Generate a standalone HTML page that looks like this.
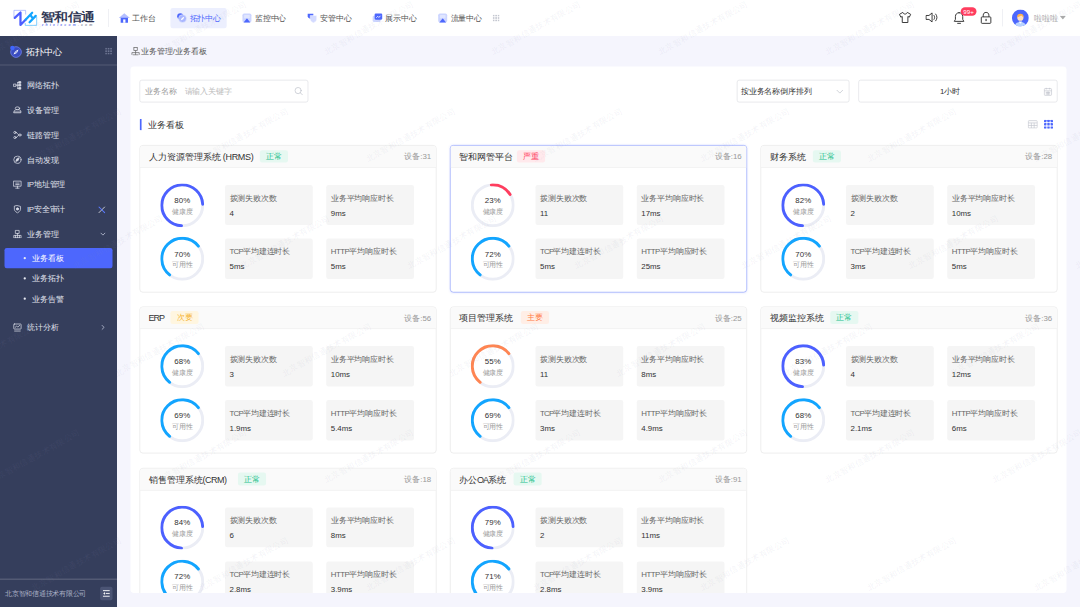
<!DOCTYPE html>
<html lang="zh"><head><meta charset="utf-8"><title>业务看板</title>
<style>
*{box-sizing:border-box;margin:0;padding:0}
html,body{width:1080px;height:607px;overflow:hidden;background:#f5f5fd}
body{font-family:"Liberation Sans",sans-serif;color:#333}
#root{position:absolute;left:0;top:0;width:1920px;height:1080px;transform:scale(0.5625);transform-origin:0 0;background:#f5f5fd;overflow:hidden;font-size:14px}
.hd{position:absolute;left:0;top:0;width:1920px;height:64px;background:#fff}
.logo{position:absolute;left:25px;top:13px}
.hdiv{position:absolute;left:192px;top:16px;width:1px;height:32px;background:#e3e5ec}
.nav{position:absolute;left:201px;top:14px;display:flex}
.ni{height:36px;padding:0 10px;margin-right:16px;display:flex;align-items:center;border-radius:4px;color:#555;font-size:14px;white-space:nowrap}
.ni svg{margin-right:4px;flex:none}
.ni span{position:relative;top:1.800px}
.ni.act{background:#eceffe;color:#4d67fd}
.hr{position:absolute;right:0;top:0;height:64px}
.side{position:absolute;left:0;top:64px;width:208px;height:1016px;background:#353e5c;color:#e4e7f2}
.sh{height:52px;border-bottom:1px solid rgba(255,255,255,.3);position:relative}
.sh .t{position:absolute;left:47px;top:16px;font-size:16px;color:#fff;line-height:24px}
.mi{height:44px;position:relative;padding-left:48px;line-height:44px;font-size:14px;color:#e1e4ee;white-space:nowrap}
.mi>svg:first-child{position:absolute;left:23px;top:14px}
.mi .arr{position:absolute;right:19px;top:16px}
.menu{padding-top:14px}
.sub{height:36px;line-height:36px;margin:0 8px;padding-left:49px;position:relative;border-radius:4px;font-size:14px;color:#e1e4ee}
.sub i{position:absolute;left:34px;top:16px;width:4px;height:4px;border-radius:50%;background:#e9ebf3}
.sub.act{background:#4d67fd;color:#fff;margin-top:3px}
.sf{position:absolute;left:0;bottom:0;width:208px;height:51px;border-top:1px solid rgba(255,255,255,.3)}
.sf span{position:absolute;left:9px;top:18px;font-size:12px;color:#aab0c6;line-height:16px;white-space:nowrap}
.sf b{position:absolute;left:178px;top:13px;width:22px;height:24px;border-radius:3px;background:#4b5474}
.bc{position:absolute;left:232px;top:64px;height:54px;line-height:54px;font-size:14px;color:#555;padding-left:19px}
.bc svg{position:absolute;left:1px;top:19px}
.panel{position:absolute;left:232px;top:118px;width:1664px;height:936px;background:#fff;border-radius:6px;overflow:hidden}
.inp{position:absolute;top:24px;height:40px;border:1px solid #d8dadf;border-radius:4px;background:#fff;font-size:14px;line-height:38px;white-space:nowrap}
.st{position:absolute;left:16px;top:93px;height:21px;border-left:4px solid #4d67fd;border-radius:2px;padding-left:11px;font-size:16px;line-height:21px;color:#333}
.card{position:absolute;width:528px;height:261.4px;border:1px solid #e0e0e0;border-radius:6px;background:#fff;overflow:hidden}
.card.sel{border-color:#7f92fb;box-shadow:0 0 4px rgba(77,103,253,.18)}
.ch{height:39px;background:#fafafa;border-bottom:1px solid #ebebeb;position:relative;line-height:39px;padding-left:15px;white-space:nowrap}
.ct{font-size:16px;color:#333}
.tag{position:absolute;top:7.500px;height:22.500px;line-height:23.500px;width:50px;text-align:center;border-radius:4px;font-size:13.500px}
.dev{position:absolute;right:8.500px;top:0;font-size:14px;color:#999}
.cb{position:relative}
.ring{position:relative;width:78px;height:78px}
.ring svg{display:block}
.rt{position:absolute;left:0;top:0;width:100%;text-align:center}
.rp{margin-top:22px;font-size:14px;line-height:16px;color:#333}
.rl{font-size:12px;line-height:16px;color:#999;margin-top:4px}
.sb{position:absolute;width:156px;height:71.5px;background:#f5f5f5;border-radius:4px;padding:12px 8px 0 8px;white-space:nowrap}
.sl{font-size:14px;line-height:22px;color:#666}
.sv{font-size:14px;line-height:22px;color:#333;margin-top:5px}
.wm{position:absolute;left:0;top:0;width:1920px;height:1080px;overflow:hidden;pointer-events:none}
.wm span{position:absolute;font-size:14.500px;line-height:16px;color:rgba(140,140,175,.11);white-space:nowrap;transform-origin:0 100%;transform:rotate(-29deg)}
</style></head><body><div id="root">
<div class="hd">
<div class="logo"><svg width="80" height="64" viewBox="0 0 80 64" style="position:absolute;left:-25px;top:-13px"><path d="M24.800 30.400V18.400H45.600V25.800" fill="none" stroke="#8f9fff" stroke-width="1.100"/><path d="M44.850 40.900V45.100H65.200V29.700" fill="none" stroke="#35b3ff" stroke-width="1.100"/><path d="M26.200 31.760L36.400 22.270V44.400L45.900 34.600" fill="none" stroke="#4d5eff" stroke-width="4" stroke-linecap="round" stroke-linejoin="round"/><path d="M45.900 34.600L57.200 22.600M52.600 39.500L63.500 28.200M54.300 26.800L58.200 32.500" fill="none" stroke="#12a5ff" stroke-width="4" stroke-linecap="round"/></svg><div style="position:absolute;left:47px;top:3.500px;font-size:23.300px;line-height:26px;font-weight:900;color:#2e3553;white-space:nowrap;transform:scale(1.045,.9);transform-origin:0 50%">智和信通</div><div style="position:absolute;left:49px;top:28.500px;font-size:6px;line-height:6px;font-weight:bold;font-style:italic;color:#6b7af0;white-space:nowrap;letter-spacing:3.900px">zhtelecom<span style="color:#8a8fa3">.com</span></div></div>
<div class="hdiv"></div>
<div class="nav"><div class="ni"><svg width="20" height="20" viewBox="0 0 20 20"><path d="M0 10L10 1.500 20 10z" fill="#b4bfff"/><path d="M3.500 9.500h13v9h-13z" fill="#4d67fd"/><rect x="8" y="12.500" width="4" height="6" fill="#fff"/></svg><span>工作台</span></div><div class="ni act"><svg width="20" height="20" viewBox="0 0 20 20"><circle cx="7.500" cy="7" r="5.500" fill="#4d67fd"/><circle cx="11.500" cy="11" r="7" fill="#a9b6ff" stroke="#eceffe" stroke-width="1"/><path d="M15 7.500l-2.300 4.700L8 14.500l2.300-4.700z" fill="#fff"/></svg><span>拓扑中心</span></div><div class="ni"><svg width="20" height="20" viewBox="0 0 20 20"><rect x="2" y="2" width="16" height="16" rx="3" fill="#ccd5ff"/><path d="M4 18l6-7.500 6 7.500z" fill="#4d67fd"/><path d="M7.500 13.500L10 10.500l2.500 3z" fill="#fff" opacity=".0"/><rect x="5" y="4.500" width="10" height="6" rx="1" fill="#e8ecff" opacity=".7"/></svg><span>监控中心</span></div><div class="ni"><svg width="20" height="20" viewBox="0 0 20 20"><path d="M2 2.500h10v4.500c0 3-5 5-5 5S2 10 2 7z" fill="#4d67fd"/><path d="M6.500 5.500h11.500v6.500c0 4-5.750 6.500-5.750 6.500S6.500 16 6.500 12z" fill="#d3daff" stroke="#fff" stroke-width=".8"/></svg><span>安管中心</span></div><div class="ni"><svg width="20" height="20" viewBox="0 0 20 20"><rect x="1.500" y="6" width="14" height="11" rx="2" fill="#ccd5ff"/><rect x="5" y="2" width="13.500" height="11" rx="2" fill="#4d67fd"/><path d="M8 9.500l2.500-2.500 2 2 3-3" stroke="#fff" stroke-width="1.500" fill="none"/></svg><span>展示中心</span></div><div class="ni"><svg width="20" height="20" viewBox="0 0 20 20"><rect x="2" y="2" width="16" height="16" rx="3" fill="#ccd5ff"/><path d="M4 18l6-7.500 6 7.500z" fill="#4d67fd"/><path d="M7.500 13.500L10 10.500l2.500 3z" fill="#fff" opacity=".0"/><rect x="5" y="4.500" width="10" height="6" rx="1" fill="#e8ecff" opacity=".7"/></svg><span>流量中心</span></div><svg style="margin:12px 0 0 -7px" width="12" height="12" viewBox="0 0 12 12" fill="#c4c7d0"><rect x="0" y="0" width="3" height="3"/><rect x="4.500" y="0" width="3" height="3"/><rect x="9" y="0" width="3" height="3"/><rect x="0" y="4.500" width="3" height="3"/><rect x="4.500" y="4.500" width="3" height="3"/><rect x="9" y="4.500" width="3" height="3"/><rect x="0" y="9" width="3" height="3"/><rect x="4.500" y="9" width="3" height="3"/><rect x="9" y="9" width="3" height="3"/></svg></div>
<svg style="position:absolute;left:1597px;top:20px" width="24" height="22" viewBox="0 0 24 22" fill="none" stroke="#333" stroke-width="1.700" stroke-linejoin="round"><path d="M8 2L2 5.500l2.500 5 2.500-1.200V20h10V9.300l2.500 1.200 2.500-5L16 2c-.5 1.800-2 3-4 3S8.500 3.800 8 2z"/></svg>
<svg style="position:absolute;left:1645px;top:20px" width="24" height="22" viewBox="0 0 24 22" fill="none" stroke="#333" stroke-width="1.700" stroke-linejoin="round" stroke-linecap="round"><path d="M2 7.500h4.500L12 3v16l-5.500-4.500H2z"/><path d="M15.500 7.500c1.500 2 1.500 5 0 7M18.500 5c3 3.500 3 8.500 0 12"/></svg>
<svg style="position:absolute;left:1694px;top:20px" width="22" height="24" viewBox="0 0 22 24" fill="none" stroke="#333" stroke-width="1.700" stroke-linejoin="round" stroke-linecap="round"><path d="M11 2.500c-4 0-6.500 3-6.500 7v5L2.500 18h17l-2-3.500v-5c0-4-2.500-7-6.500-7z"/><path d="M8.500 21.500h5"/></svg>
<div style="position:absolute;left:1708px;top:13px;width:28px;height:15px;border-radius:8px;background:#ff3d5e;color:#fff;font-size:11px;line-height:15px;text-align:center">99+</div>
<svg style="position:absolute;left:1742px;top:20px" width="22" height="24" viewBox="0 0 22 24" fill="none" stroke="#333" stroke-width="1.700" stroke-linejoin="round"><rect x="2.500" y="10" width="17" height="11.500" rx="1.500"/><path d="M6 10V7c0-3 2-5 5-5s5 2 5 5v3"/><rect x="10" y="13.500" width="2" height="4" fill="#333" stroke="none"/></svg>
<div style="position:absolute;left:1782px;top:16px;width:1px;height:31px;background:#e3e5ec"></div>
<svg style="position:absolute;left:1799px;top:17px" width="30" height="30" viewBox="0 0 30 30"><defs><clipPath id="av"><circle cx="15" cy="15" r="15"/></clipPath></defs><circle cx="15" cy="15" r="15" fill="#4d67fd"/><g clip-path="url(#av)"><path d="M5 31c0-6 4-9 10-9s10 3 10 9z" fill="#b9d4ff"/><path d="M12 21h6l-3 4z" fill="#fff"/><circle cx="15" cy="14.500" r="5.500" fill="#ffe0c2"/><path d="M9 13.500c0-4 2.500-6 6-6s6 2 6 6c-2-.5-3.500-1.500-4.500-3-1.500 1.500-4.500 2.500-7.500 3z" fill="#ffb04d"/></g></svg>
<div style="position:absolute;left:1839px;top:21px;font-size:14px;line-height:22px;color:#aaa;white-space:nowrap">啦啦啦</div>
<svg style="position:absolute;left:1884px;top:28px" width="11" height="7" viewBox="0 0 11 7"><path d="M0 0h11L5.500 6.500z" fill="#aaa"/></svg>
</div>
<div class="side">
<div class="sh"><svg style="position:absolute;left:16px;top:16px" width="24" height="24" viewBox="0 0 24 24"><circle cx="12.500" cy="12.500" r="9.500" fill="#3a4cc0" stroke="#6f80ea" stroke-width="1.500"/><circle cx="6" cy="5.500" r="4" fill="#3f66ff"/><path d="M17 8l-3 6-6 3 3-6z" fill="#fff"/><circle cx="12.500" cy="12.500" r="1.200" fill="#3a4cc0"/></svg><svg style="position:absolute;left:187px;top:21px" width="12" height="12" viewBox="0 0 12 12" fill="#6d7592"><rect x="0" y="0" width="3" height="3"/><rect x="4.500" y="0" width="3" height="3"/><rect x="9" y="0" width="3" height="3"/><rect x="0" y="4.500" width="3" height="3"/><rect x="4.500" y="4.500" width="3" height="3"/><rect x="9" y="4.500" width="3" height="3"/><rect x="0" y="9" width="3" height="3"/><rect x="4.500" y="9" width="3" height="3"/><rect x="9" y="9" width="3" height="3"/></svg><div class="t">拓扑中心</div></div>
<div class="menu"><div class="mi"><svg width="16" height="16" viewBox="0 0 16 16" fill="none" stroke="#dde0ea" stroke-width="1.3" stroke-linecap="round" stroke-linejoin="round"><rect x="1.5" y="5.5" width="4" height="4"/><path d="M5.5 7.5h3M8.5 2.5v11M8.5 2.5h3M8.5 7.5h3M8.5 13.5h3"/><rect x="11" y="1" width="3" height="3" fill="#dde0ea"/><rect x="11" y="6" width="3" height="3" fill="#dde0ea"/><rect x="11" y="11.5" width="3" height="3" fill="#dde0ea"/></svg><span>网络拓扑</span></div><div class="mi"><svg width="16" height="16" viewBox="0 0 16 16" fill="none" stroke="#dde0ea" stroke-width="1.3" stroke-linecap="round" stroke-linejoin="round"><ellipse cx="8" cy="4.5" rx="4" ry="2.5"/><path d="M2 9.5c0-1.5 2-2.5 6-2.5s6 1 6 2.5v3H2z"/><path d="M2 11h12"/></svg><span>设备管理</span></div><div class="mi"><svg width="16" height="16" viewBox="0 0 16 16" fill="none" stroke="#dde0ea" stroke-width="1.3" stroke-linecap="round" stroke-linejoin="round"><circle cx="3.5" cy="3.5" r="2"/><circle cx="3.5" cy="12.5" r="2"/><circle cx="12.5" cy="8" r="2"/><path d="M5.5 3.5c3 0 3 4.5 5 4.5M5.5 12.5c3 0 3-4.5 5-4.5"/></svg><span>链路管理</span></div><div class="mi"><svg width="16" height="16" viewBox="0 0 16 16" fill="none" stroke="#dde0ea" stroke-width="1.3" stroke-linecap="round" stroke-linejoin="round"><circle cx="8" cy="8" r="6.5"/><path d="M11 5L9.3 9.3 5 11l1.7-4.3z" fill="#dde0ea"/></svg><span>自动发现</span></div><div class="mi"><svg width="16" height="16" viewBox="0 0 16 16" fill="none" stroke="#dde0ea" stroke-width="1.3" stroke-linecap="round" stroke-linejoin="round"><rect x="1.5" y="2" width="13" height="9"/><path d="M5 14.5h6M8 11v3.5M5 5.5h6M5 8h6"/></svg><span><span style="letter-spacing:-.6px">IP</span>地址管理</span></div><div class="mi"><svg width="16" height="16" viewBox="0 0 16 16" fill="none" stroke="#dde0ea" stroke-width="1.3" stroke-linecap="round" stroke-linejoin="round"><path d="M8 1.5l5.5 1.5v5c0 3.5-5.5 6.5-5.5 6.5S2.500 11.500 2.500 8V3z"/><circle cx="8" cy="7.500" r="2" fill="#dde0ea"/></svg><span><span style="letter-spacing:-.6px">IP</span>安全审计</span><svg class="arr" style="right:20px" width="14" height="14" viewBox="0 0 14 14" fill="none" stroke-linecap="round"><path d="M2 12L12 2" stroke="#fff" stroke-width="1.300"/><path d="M2 2l10 10" stroke="#5b7bff" stroke-width="1.800"/></svg></div><div class="mi"><svg width="16" height="16" viewBox="0 0 16 16" fill="none" stroke="#dde0ea" stroke-width="1.3" stroke-linecap="round" stroke-linejoin="round"><rect x="5" y="1.500" width="6" height="5.500"/><path d="M3 14.500h10M1.500 14.500v-4h13v4M8 7v7.500M4.500 10.500v4M11.500 10.500v4"/></svg><span>业务管理</span><svg class="arr" width="12" height="12" viewBox="0 0 12 12" fill="none" stroke="#b8bed2" stroke-width="1.5" stroke-linecap="round" stroke-linejoin="round"><path d="M2.500 4.500L6 8l3.500-3.500"/></svg></div><div class="sub act"><i></i>业务看板</div><div class="sub"><i></i>业务拓扑</div><div class="sub"><i></i>业务告警</div><div class="mi" style="margin-top:11px"><svg width="16" height="16" viewBox="0 0 16 16" fill="none" stroke="#dde0ea" stroke-width="1.3" stroke-linecap="round" stroke-linejoin="round"><rect x="1.500" y="2" width="13" height="9" rx="1"/><path d="M4 8l2.500-2.500L8.500 7.500 12 4.500M3 14.500h10"/></svg><span>统计分析</span><svg class="arr" width="12" height="12" viewBox="0 0 12 12" fill="none" stroke="#b8bed2" stroke-width="1.500" stroke-linecap="round" stroke-linejoin="round"><path d="M4.500 2.500L8 6 4.500 9.500"/></svg></div></div>
<div class="sf"><span>北京智和信通技术有限公司</span><b><svg style="position:absolute;left:4px;top:5px" width="14" height="14" viewBox="0 0 14 14" fill="none" stroke="#fff" stroke-width="1.600"><path d="M1 2h12M6 7h7M1 12h12"/><path d="M4.500 4.500L1.500 7l3 2.500z" fill="#fff" stroke="none"/></svg></b></div>
</div>
<div class="bc"><svg width="16" height="16" viewBox="0 0 16 16" fill="none" stroke="#666" stroke-width="1.300"><rect x="5" y="1.500" width="6" height="5.500"/><path d="M3 14.500h10M1.500 14.500v-4h13v4M8 7v7.500"/></svg>业务管理/业务看板</div>
<div class="panel">
<div class="inp" style="left:16px;width:300px;padding-left:9px;color:#999">业务名称<span style="color:#bbb;margin-left:14px">请输入关键字</span><svg style="position:absolute;right:8px;top:11px" width="16" height="16" viewBox="0 0 16 16" fill="none" stroke="#c0c4cc" stroke-width="1.300" stroke-linecap="round"><circle cx="7" cy="7" r="5.500"/><path d="M11 11l3.500 3.500"/></svg></div>
<div class="inp" style="left:1078px;width:200px;padding-left:6px;color:#333">按业务名称倒序排列<svg style="position:absolute;right:9px;top:13px" width="14" height="14" viewBox="0 0 14 14" fill="none" stroke="#c0c4cc" stroke-width="1.300" stroke-linecap="round" stroke-linejoin="round"><path d="M2 4.500l5 5 5-5"/></svg></div>
<div class="inp" style="left:1294px;width:354px;text-align:center;color:#333;padding-right:28px">1小时<svg style="position:absolute;right:8px;top:12px" width="16" height="16" viewBox="0 0 16 16" fill="none" stroke="#c0c4cc" stroke-width="1.200"><rect x="1.500" y="2.500" width="13" height="12" rx="1.500"/><path d="M1.500 6.500h13M5 1v3M11 1v3M4 9.500h8M4 12h8M6.700 7.500v6M9.300 7.500v6"/></svg></div>
<div class="st">业务看板</div>
<svg style="position:absolute;left:1595px;top:95px" width="18" height="16" viewBox="0 0 18 16" fill="none" stroke="#c0c4cc" stroke-width="1.200"><rect x="1" y="1.500" width="16" height="13" rx="1.500"/><path d="M1 5.500h16M1 10h16M6.500 5.500v9M11.500 5.500v9"/></svg>
<svg style="position:absolute;left:1624px;top:95px" width="16" height="16" viewBox="0 0 16 16" fill="#4d67fd"><rect x="0" y="0" width="4.300" height="4.300" rx=".8"/><rect x="5.850" y="0" width="4.300" height="4.300" rx=".8"/><rect x="11.700" y="0" width="4.300" height="4.300" rx=".8"/><rect x="0" y="5.850" width="4.300" height="4.300" rx=".8"/><rect x="5.850" y="5.850" width="4.300" height="4.300" rx=".8"/><rect x="11.700" y="5.850" width="4.300" height="4.300" rx=".8"/><rect x="0" y="11.700" width="4.300" height="4.300" rx=".8"/><rect x="5.850" y="11.700" width="4.300" height="4.300" rx=".8"/><rect x="11.700" y="11.700" width="4.300" height="4.300" rx=".8"/></svg>
<div class="card" style="left:16px;top:140.3px">
<div class="ch"><span class="ct">人力资源管理系统<span style="letter-spacing:-.5px"> (HRMS)</span></span><span class="tag" style="left:212.5px;background:#e6f8f1;color:#1abf8c">正常</span><span class="dev">设备:31</span></div>
<div class="cb">
<div style="position:absolute;left:36px;top:27.4px"><div class="ring"><svg width="78" height="78" viewBox="0 0 78 78"><circle cx="39.0" cy="39.0" r="36.4" fill="none" stroke="#ebedf5" stroke-width="5.2"/><path d="M37.73 75.38A36.4 36.4 0 1 1 75.35 37.09" fill="none" stroke="#4c60ff" stroke-width="5.2" stroke-linecap="round"/></svg><div class="rt"><div class="rp">80%</div><div class="rl">健康度</div></div></div></div>
<div style="position:absolute;left:36px;top:123.1px"><div class="ring"><svg width="78" height="78" viewBox="0 0 78 78"><circle cx="39.0" cy="39.0" r="36.4" fill="none" stroke="#ebedf5" stroke-width="5.2"/><path d="M16.59 67.68A36.4 36.4 0 1 1 67.68 16.59" fill="none" stroke="#12a5ff" stroke-width="5.2" stroke-linecap="round"/></svg><div class="rt"><div class="rp">70%</div><div class="rl">可用性</div></div></div></div>
<div class="sb" style="left:151px;top:30.4px"><div class="sl">拨测失败次数</div><div class="sv">4</div></div>
<div class="sb" style="left:331px;top:30.4px"><div class="sl">业务平均响应时长</div><div class="sv">9ms</div></div>
<div class="sb" style="left:151px;top:126.2px"><div class="sl"><span style="letter-spacing:-1.400px">TCP</span>平均建连时长</div><div class="sv">5ms</div></div>
<div class="sb" style="left:331px;top:126.2px"><div class="sl"><span style="letter-spacing:-.85px">HTTP</span>平均响应时长</div><div class="sv">5ms</div></div>
</div></div>
<div class="card sel" style="left:568px;top:140.3px">
<div class="ch"><span class="ct">智和网管平台</span><span class="tag" style="left:117.9px;background:#ffe9ec;color:#ff3d5e">严重</span><span class="dev">设备:16</span></div>
<div class="cb">
<div style="position:absolute;left:36px;top:27.4px"><div class="ring"><svg width="78" height="78" viewBox="0 0 78 78"><circle cx="39.0" cy="39.0" r="36.4" fill="none" stroke="#ebedf5" stroke-width="5.2"/><path d="M36.46 2.69A36.4 36.4 0 0 1 69.87 19.71" fill="none" stroke="#ff3d5e" stroke-width="5.2" stroke-linecap="round"/></svg><div class="rt"><div class="rp">23%</div><div class="rl">健康度</div></div></div></div>
<div style="position:absolute;left:36px;top:123.1px"><div class="ring"><svg width="78" height="78" viewBox="0 0 78 78"><circle cx="39.0" cy="39.0" r="36.4" fill="none" stroke="#ebedf5" stroke-width="5.2"/><path d="M16.59 67.68A36.4 36.4 0 1 1 67.68 16.59" fill="none" stroke="#12a5ff" stroke-width="5.2" stroke-linecap="round"/></svg><div class="rt"><div class="rp">72%</div><div class="rl">可用性</div></div></div></div>
<div class="sb" style="left:151px;top:30.4px"><div class="sl">拨测失败次数</div><div class="sv">11</div></div>
<div class="sb" style="left:331px;top:30.4px"><div class="sl">业务平均响应时长</div><div class="sv">17ms</div></div>
<div class="sb" style="left:151px;top:126.2px"><div class="sl"><span style="letter-spacing:-1.400px">TCP</span>平均建连时长</div><div class="sv">5ms</div></div>
<div class="sb" style="left:331px;top:126.2px"><div class="sl"><span style="letter-spacing:-.85px">HTTP</span>平均响应时长</div><div class="sv">25ms</div></div>
</div></div>
<div class="card" style="left:1120px;top:140.3px">
<div class="ch"><span class="ct">财务系统</span><span class="tag" style="left:92.0px;background:#e6f8f1;color:#1abf8c">正常</span><span class="dev">设备:28</span></div>
<div class="cb">
<div style="position:absolute;left:36px;top:27.4px"><div class="ring"><svg width="78" height="78" viewBox="0 0 78 78"><circle cx="39.0" cy="39.0" r="36.4" fill="none" stroke="#ebedf5" stroke-width="5.2"/><path d="M37.73 75.38A36.4 36.4 0 1 1 75.35 37.09" fill="none" stroke="#4c60ff" stroke-width="5.2" stroke-linecap="round"/></svg><div class="rt"><div class="rp">82%</div><div class="rl">健康度</div></div></div></div>
<div style="position:absolute;left:36px;top:123.1px"><div class="ring"><svg width="78" height="78" viewBox="0 0 78 78"><circle cx="39.0" cy="39.0" r="36.4" fill="none" stroke="#ebedf5" stroke-width="5.2"/><path d="M16.59 67.68A36.4 36.4 0 1 1 67.68 16.59" fill="none" stroke="#12a5ff" stroke-width="5.2" stroke-linecap="round"/></svg><div class="rt"><div class="rp">70%</div><div class="rl">可用性</div></div></div></div>
<div class="sb" style="left:151px;top:30.4px"><div class="sl">拨测失败次数</div><div class="sv">2</div></div>
<div class="sb" style="left:331px;top:30.4px"><div class="sl">业务平均响应时长</div><div class="sv">10ms</div></div>
<div class="sb" style="left:151px;top:126.2px"><div class="sl"><span style="letter-spacing:-1.400px">TCP</span>平均建连时长</div><div class="sv">3ms</div></div>
<div class="sb" style="left:331px;top:126.2px"><div class="sl"><span style="letter-spacing:-.85px">HTTP</span>平均响应时长</div><div class="sv">5ms</div></div>
</div></div>
<div class="card" style="left:16px;top:426.90000000000003px">
<div class="ch"><span class="ct"><span style="letter-spacing:-1.75px">ERP</span></span><span class="tag" style="left:54.0px;background:#fff6e0;color:#f5b431">次要</span><span class="dev">设备:56</span></div>
<div class="cb">
<div style="position:absolute;left:36px;top:27.4px"><div class="ring"><svg width="78" height="78" viewBox="0 0 78 78"><circle cx="39.0" cy="39.0" r="36.4" fill="none" stroke="#ebedf5" stroke-width="5.2"/><path d="M16.59 67.68A36.4 36.4 0 1 1 67.68 16.59" fill="none" stroke="#12a5ff" stroke-width="5.2" stroke-linecap="round"/></svg><div class="rt"><div class="rp">68%</div><div class="rl">健康度</div></div></div></div>
<div style="position:absolute;left:36px;top:123.1px"><div class="ring"><svg width="78" height="78" viewBox="0 0 78 78"><circle cx="39.0" cy="39.0" r="36.4" fill="none" stroke="#ebedf5" stroke-width="5.2"/><path d="M16.59 67.68A36.4 36.4 0 1 1 67.68 16.59" fill="none" stroke="#12a5ff" stroke-width="5.2" stroke-linecap="round"/></svg><div class="rt"><div class="rp">69%</div><div class="rl">可用性</div></div></div></div>
<div class="sb" style="left:151px;top:30.4px"><div class="sl">拨测失败次数</div><div class="sv">3</div></div>
<div class="sb" style="left:331px;top:30.4px"><div class="sl">业务平均响应时长</div><div class="sv">10ms</div></div>
<div class="sb" style="left:151px;top:126.2px"><div class="sl"><span style="letter-spacing:-1.400px">TCP</span>平均建连时长</div><div class="sv">1.9ms</div></div>
<div class="sb" style="left:331px;top:126.2px"><div class="sl"><span style="letter-spacing:-.85px">HTTP</span>平均响应时长</div><div class="sv">5.4ms</div></div>
</div></div>
<div class="card" style="left:568px;top:426.90000000000003px">
<div class="ch"><span class="ct">项目管理系统</span><span class="tag" style="left:125.4px;background:#ffeee6;color:#ff7a45">主要</span><span class="dev">设备:25</span></div>
<div class="cb">
<div style="position:absolute;left:36px;top:27.4px"><div class="ring"><svg width="78" height="78" viewBox="0 0 78 78"><circle cx="39.0" cy="39.0" r="36.4" fill="none" stroke="#ebedf5" stroke-width="5.2"/><path d="M16.59 67.68A36.4 36.4 0 1 1 67.68 16.59" fill="none" stroke="#ff8552" stroke-width="5.2" stroke-linecap="round"/></svg><div class="rt"><div class="rp">55%</div><div class="rl">健康度</div></div></div></div>
<div style="position:absolute;left:36px;top:123.1px"><div class="ring"><svg width="78" height="78" viewBox="0 0 78 78"><circle cx="39.0" cy="39.0" r="36.4" fill="none" stroke="#ebedf5" stroke-width="5.2"/><path d="M16.59 67.68A36.4 36.4 0 1 1 67.68 16.59" fill="none" stroke="#12a5ff" stroke-width="5.2" stroke-linecap="round"/></svg><div class="rt"><div class="rp">69%</div><div class="rl">可用性</div></div></div></div>
<div class="sb" style="left:151px;top:30.4px"><div class="sl">拨测失败次数</div><div class="sv">11</div></div>
<div class="sb" style="left:331px;top:30.4px"><div class="sl">业务平均响应时长</div><div class="sv">8ms</div></div>
<div class="sb" style="left:151px;top:126.2px"><div class="sl"><span style="letter-spacing:-1.400px">TCP</span>平均建连时长</div><div class="sv">3ms</div></div>
<div class="sb" style="left:331px;top:126.2px"><div class="sl"><span style="letter-spacing:-.85px">HTTP</span>平均响应时长</div><div class="sv">4.9ms</div></div>
</div></div>
<div class="card" style="left:1120px;top:426.90000000000003px">
<div class="ch"><span class="ct">视频监控系统</span><span class="tag" style="left:122.9px;background:#e6f8f1;color:#1abf8c">正常</span><span class="dev">设备:36</span></div>
<div class="cb">
<div style="position:absolute;left:36px;top:27.4px"><div class="ring"><svg width="78" height="78" viewBox="0 0 78 78"><circle cx="39.0" cy="39.0" r="36.4" fill="none" stroke="#ebedf5" stroke-width="5.2"/><path d="M37.73 75.38A36.4 36.4 0 1 1 75.35 37.09" fill="none" stroke="#4c60ff" stroke-width="5.2" stroke-linecap="round"/></svg><div class="rt"><div class="rp">83%</div><div class="rl">健康度</div></div></div></div>
<div style="position:absolute;left:36px;top:123.1px"><div class="ring"><svg width="78" height="78" viewBox="0 0 78 78"><circle cx="39.0" cy="39.0" r="36.4" fill="none" stroke="#ebedf5" stroke-width="5.2"/><path d="M16.59 67.68A36.4 36.4 0 1 1 67.68 16.59" fill="none" stroke="#12a5ff" stroke-width="5.2" stroke-linecap="round"/></svg><div class="rt"><div class="rp">68%</div><div class="rl">可用性</div></div></div></div>
<div class="sb" style="left:151px;top:30.4px"><div class="sl">拨测失败次数</div><div class="sv">4</div></div>
<div class="sb" style="left:331px;top:30.4px"><div class="sl">业务平均响应时长</div><div class="sv">12ms</div></div>
<div class="sb" style="left:151px;top:126.2px"><div class="sl"><span style="letter-spacing:-1.400px">TCP</span>平均建连时长</div><div class="sv">2.1ms</div></div>
<div class="sb" style="left:331px;top:126.2px"><div class="sl"><span style="letter-spacing:-.85px">HTTP</span>平均响应时长</div><div class="sv">6ms</div></div>
</div></div>
<div class="card" style="left:16px;top:713.5px">
<div class="ch"><span class="ct">销售管理系统<span style="letter-spacing:-.9px">(CRM)</span></span><span class="tag" style="left:173.9px;background:#e6f8f1;color:#1abf8c">正常</span><span class="dev">设备:18</span></div>
<div class="cb">
<div style="position:absolute;left:36px;top:27.4px"><div class="ring"><svg width="78" height="78" viewBox="0 0 78 78"><circle cx="39.0" cy="39.0" r="36.4" fill="none" stroke="#ebedf5" stroke-width="5.2"/><path d="M37.73 75.38A36.4 36.4 0 1 1 75.35 37.09" fill="none" stroke="#4c60ff" stroke-width="5.2" stroke-linecap="round"/></svg><div class="rt"><div class="rp">84%</div><div class="rl">健康度</div></div></div></div>
<div style="position:absolute;left:36px;top:123.1px"><div class="ring"><svg width="78" height="78" viewBox="0 0 78 78"><circle cx="39.0" cy="39.0" r="36.4" fill="none" stroke="#ebedf5" stroke-width="5.2"/><path d="M16.59 67.68A36.4 36.4 0 1 1 67.68 16.59" fill="none" stroke="#12a5ff" stroke-width="5.2" stroke-linecap="round"/></svg><div class="rt"><div class="rp">72%</div><div class="rl">可用性</div></div></div></div>
<div class="sb" style="left:151px;top:30.4px"><div class="sl">拨测失败次数</div><div class="sv">6</div></div>
<div class="sb" style="left:331px;top:30.4px"><div class="sl">业务平均响应时长</div><div class="sv">8ms</div></div>
<div class="sb" style="left:151px;top:126.2px"><div class="sl"><span style="letter-spacing:-1.400px">TCP</span>平均建连时长</div><div class="sv">2.8ms</div></div>
<div class="sb" style="left:331px;top:126.2px"><div class="sl"><span style="letter-spacing:-.85px">HTTP</span>平均响应时长</div><div class="sv">3.9ms</div></div>
</div></div>
<div class="card" style="left:568px;top:713.5px">
<div class="ch"><span class="ct">办公<span style="letter-spacing:-1.75px">OA</span>系统</span><span class="tag" style="left:112.0px;background:#e6f8f1;color:#1abf8c">正常</span><span class="dev">设备:91</span></div>
<div class="cb">
<div style="position:absolute;left:36px;top:27.4px"><div class="ring"><svg width="78" height="78" viewBox="0 0 78 78"><circle cx="39.0" cy="39.0" r="36.4" fill="none" stroke="#ebedf5" stroke-width="5.2"/><path d="M37.73 75.38A36.4 36.4 0 1 1 75.35 37.09" fill="none" stroke="#4c60ff" stroke-width="5.2" stroke-linecap="round"/></svg><div class="rt"><div class="rp">79%</div><div class="rl">健康度</div></div></div></div>
<div style="position:absolute;left:36px;top:123.1px"><div class="ring"><svg width="78" height="78" viewBox="0 0 78 78"><circle cx="39.0" cy="39.0" r="36.4" fill="none" stroke="#ebedf5" stroke-width="5.2"/><path d="M16.59 67.68A36.4 36.4 0 1 1 67.68 16.59" fill="none" stroke="#12a5ff" stroke-width="5.2" stroke-linecap="round"/></svg><div class="rt"><div class="rp">71%</div><div class="rl">可用性</div></div></div></div>
<div class="sb" style="left:151px;top:30.4px"><div class="sl">拨测失败次数</div><div class="sv">2</div></div>
<div class="sb" style="left:331px;top:30.4px"><div class="sl">业务平均响应时长</div><div class="sv">11ms</div></div>
<div class="sb" style="left:151px;top:126.2px"><div class="sl"><span style="letter-spacing:-1.400px">TCP</span>平均建连时长</div><div class="sv">2.8ms</div></div>
<div class="sb" style="left:331px;top:126.2px"><div class="sl"><span style="letter-spacing:-.85px">HTTP</span>平均响应时长</div><div class="sv">3.9ms</div></div>
</div></div>
</div>
<div class="wm"><span style="left:-385px;top:-107px">北京智和信通技术有限公司</span><span style="left:-88px;top:-107px">北京智和信通技术有限公司</span><span style="left:209px;top:-107px">北京智和信通技术有限公司</span><span style="left:506px;top:-107px">北京智和信通技术有限公司</span><span style="left:803px;top:-107px">北京智和信通技术有限公司</span><span style="left:1100px;top:-107px">北京智和信通技术有限公司</span><span style="left:1397px;top:-107px">北京智和信通技术有限公司</span><span style="left:1694px;top:-107px">北京智和信通技术有限公司</span><span style="left:1991px;top:-107px">北京智和信通技术有限公司</span><span style="left:-607px;top:84px">北京智和信通技术有限公司</span><span style="left:-310px;top:84px">北京智和信通技术有限公司</span><span style="left:-13px;top:84px">北京智和信通技术有限公司</span><span style="left:284px;top:84px">北京智和信通技术有限公司</span><span style="left:581px;top:84px">北京智和信通技术有限公司</span><span style="left:878px;top:84px">北京智和信通技术有限公司</span><span style="left:1175px;top:84px">北京智和信通技术有限公司</span><span style="left:1472px;top:84px">北京智和信通技术有限公司</span><span style="left:1769px;top:84px">北京智和信通技术有限公司</span><span style="left:-533px;top:275px">北京智和信通技术有限公司</span><span style="left:-236px;top:275px">北京智和信通技术有限公司</span><span style="left:61px;top:275px">北京智和信通技术有限公司</span><span style="left:358px;top:275px">北京智和信通技术有限公司</span><span style="left:655px;top:275px">北京智和信通技术有限公司</span><span style="left:952px;top:275px">北京智和信通技术有限公司</span><span style="left:1249px;top:275px">北京智和信通技术有限公司</span><span style="left:1546px;top:275px">北京智和信通技术有限公司</span><span style="left:1843px;top:275px">北京智和信通技术有限公司</span><span style="left:-459px;top:465px">北京智和信通技术有限公司</span><span style="left:-162px;top:465px">北京智和信通技术有限公司</span><span style="left:135px;top:465px">北京智和信通技术有限公司</span><span style="left:432px;top:465px">北京智和信通技术有限公司</span><span style="left:729px;top:465px">北京智和信通技术有限公司</span><span style="left:1026px;top:465px">北京智和信通技术有限公司</span><span style="left:1323px;top:465px">北京智和信通技术有限公司</span><span style="left:1620px;top:465px">北京智和信通技术有限公司</span><span style="left:1917px;top:465px">北京智和信通技术有限公司</span><span style="left:-385px;top:656px">北京智和信通技术有限公司</span><span style="left:-88px;top:656px">北京智和信通技术有限公司</span><span style="left:209px;top:656px">北京智和信通技术有限公司</span><span style="left:506px;top:656px">北京智和信通技术有限公司</span><span style="left:803px;top:656px">北京智和信通技术有限公司</span><span style="left:1100px;top:656px">北京智和信通技术有限公司</span><span style="left:1397px;top:656px">北京智和信通技术有限公司</span><span style="left:1694px;top:656px">北京智和信通技术有限公司</span><span style="left:1991px;top:656px">北京智和信通技术有限公司</span><span style="left:-607px;top:846px">北京智和信通技术有限公司</span><span style="left:-310px;top:846px">北京智和信通技术有限公司</span><span style="left:-13px;top:846px">北京智和信通技术有限公司</span><span style="left:284px;top:846px">北京智和信通技术有限公司</span><span style="left:581px;top:846px">北京智和信通技术有限公司</span><span style="left:878px;top:846px">北京智和信通技术有限公司</span><span style="left:1175px;top:846px">北京智和信通技术有限公司</span><span style="left:1472px;top:846px">北京智和信通技术有限公司</span><span style="left:1769px;top:846px">北京智和信通技术有限公司</span><span style="left:-533px;top:1037px">北京智和信通技术有限公司</span><span style="left:-236px;top:1037px">北京智和信通技术有限公司</span><span style="left:61px;top:1037px">北京智和信通技术有限公司</span><span style="left:358px;top:1037px">北京智和信通技术有限公司</span><span style="left:655px;top:1037px">北京智和信通技术有限公司</span><span style="left:952px;top:1037px">北京智和信通技术有限公司</span><span style="left:1249px;top:1037px">北京智和信通技术有限公司</span><span style="left:1546px;top:1037px">北京智和信通技术有限公司</span><span style="left:1843px;top:1037px">北京智和信通技术有限公司</span><span style="left:-459px;top:1228px">北京智和信通技术有限公司</span><span style="left:-162px;top:1228px">北京智和信通技术有限公司</span><span style="left:135px;top:1228px">北京智和信通技术有限公司</span><span style="left:432px;top:1228px">北京智和信通技术有限公司</span><span style="left:729px;top:1228px">北京智和信通技术有限公司</span><span style="left:1026px;top:1228px">北京智和信通技术有限公司</span><span style="left:1323px;top:1228px">北京智和信通技术有限公司</span><span style="left:1620px;top:1228px">北京智和信通技术有限公司</span><span style="left:1917px;top:1228px">北京智和信通技术有限公司</span></div></div></body></html>
